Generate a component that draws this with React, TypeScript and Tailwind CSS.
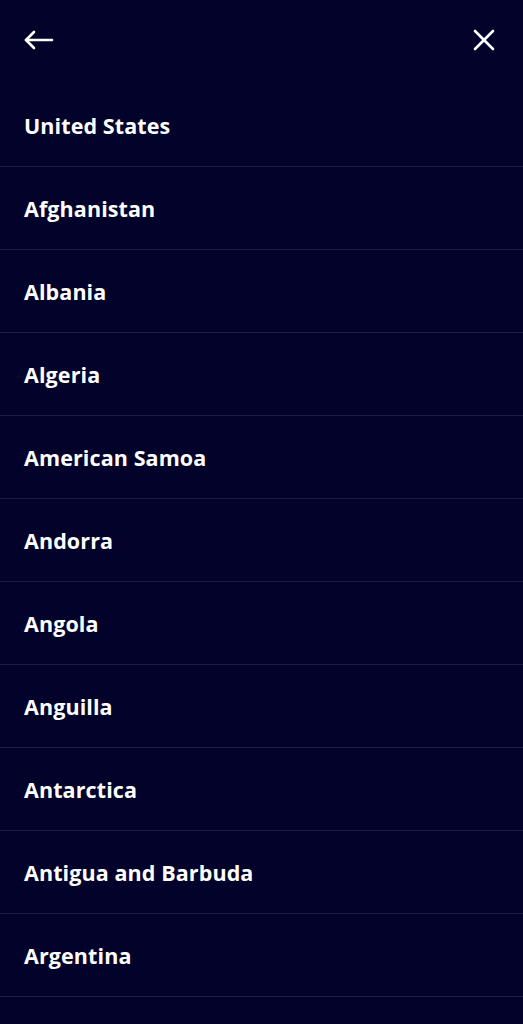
const countries = [
  'United States',
  'Afghanistan',
  'Albania',
  'Algeria',
  'American Samoa',
  'Andorra',
  'Angola',
  'Anguilla',
  'Antarctica',
  'Antigua and Barbuda',
  'Argentina',
];

export default function App() {
  return (
    <div className="h-[1024px] overflow-hidden bg-[#03022a] text-white" style={{ fontFamily: '"Open Sans", sans-serif' }}>
      <header className="flex h-[84px] items-start justify-between pl-[24px] pr-[28px] pt-[29px]">
        <button className="text-white">
          <svg width="30" height="22" viewBox="0 0 30 22" fill="none" stroke="currentColor" strokeWidth="2.6" strokeLinecap="round" strokeLinejoin="round">
            <path d="M2 11h26" />
            <path d="M10 3 2 11l8 8" />
          </svg>
        </button>
        <button className="text-white">
          <svg width="22" height="22" viewBox="0 0 22 22" fill="none" stroke="currentColor" strokeWidth="2.6" strokeLinecap="round">
            <path d="M2 2l18 18" />
            <path d="M20 2 2 20" />
          </svg>
        </button>
      </header>
      <ul>
        {countries.map((name) => (
          <li key={name} className="flex h-[83px] items-center border-b border-[#1d1c45] px-6 pt-[2px]">
            <span className="text-[21.5px] font-bold tracking-[0.1px]">{name}</span>
          </li>
        ))}
      </ul>
    </div>
  );
}
